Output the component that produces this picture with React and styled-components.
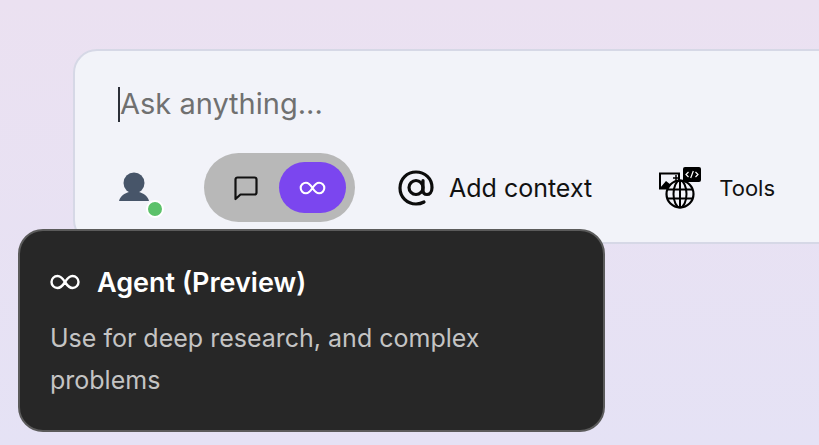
import React from 'react';
import styled, { createGlobalStyle } from 'styled-components';

const GlobalStyle = createGlobalStyle`
  html, body {
    margin: 0;
    padding: 0;
  }
  body {
    font-family: Inter, "Liberation Sans", sans-serif;
    overflow: hidden;
  }
`;

const Page = styled.div`
  position: relative;
  box-sizing: border-box;
  width: 819px;
  height: 445px;
  overflow: hidden;
  padding: 49px 0 0 73px;
  background: linear-gradient(180deg, #ebe1f1 0%, #e5e2f5 100%);
`;

const Card = styled.div`
  box-sizing: border-box;
  width: 900px;
  height: 195px;
  padding: 35px 0 0 43px;
  background: #f2f3f9;
  border: 2px solid #d6d8e6;
  border-radius: 24px;
`;

const InputLine = styled.div`
  display: flex;
  align-items: center;
  height: 36px;
`;

const Caret = styled.span`
  width: 2px;
  height: 35px;
  background: #2b2f38;
`;

const Placeholder = styled.span`
  font-size: 29px;
  line-height: 36px;
  color: #707070;
`;

const Toolbar = styled.div`
  display: flex;
  align-items: center;
  margin-top: 31px;
  height: 69px;
`;

const Avatar = styled.div`
  position: relative;
  width: 32px;
  height: 32px;
  margin-right: 54px;
`;

const OnlineDot = styled.span`
  position: absolute;
  right: -14px;
  bottom: -14px;
  box-sizing: border-box;
  width: 18px;
  height: 18px;
  background: #5cc16a;
  border: 2px solid #fff;
  border-radius: 50%;
`;

const ModeToggle = styled.div`
  display: flex;
  align-items: center;
  box-sizing: border-box;
  width: 151px;
  height: 69px;
  padding: 0 9px 0 8px;
  background: #b8b8b8;
  border-radius: 35px;
`;

const ModeButton = styled.div`
  display: flex;
  align-items: center;
  justify-content: center;
  width: 67px;
  height: 51px;
  border-radius: 26px;
  background: ${(p) => (p.$active ? '#7b46ef' : 'transparent')};
`;

const ContextButton = styled.div`
  display: flex;
  align-items: center;
  gap: 15px;
  margin-left: 43px;
  font-size: 25px;
  color: #111;
`;

const ToolsButton = styled.div`
  display: flex;
  align-items: center;
  gap: 13px;
  margin-left: 66px;
  font-size: 22px;
  color: #111;
`;

const Tooltip = styled.div`
  position: absolute;
  left: 18px;
  top: 229px;
  box-sizing: border-box;
  width: 587px;
  height: 203px;
  padding: 33px 30px 0 30px;
  background: #272727;
  border: 2px solid #5b5b5b;
  border-radius: 25px;
`;

const TooltipTitle = styled.div`
  display: flex;
  align-items: center;
  gap: 17px;
  height: 36px;
  font-size: 27px;
  font-weight: 600;
  color: #fff;
`;

const TooltipText = styled.p`
  margin: 17px 0 0;
  font-size: 25px;
  line-height: 42px;
  color: #c4c4c4;
`;

const InfinityIcon = ({ width, height, strokeWidth }) => (
  <svg width={width} height={height} viewBox="0 0 30 16" fill="none" stroke="#fff" strokeWidth={strokeWidth}>
    <path d="M15 8C12.5 4 10.5 2 7.5 2a6 6 0 0 0 0 12c3 0 5-2 7.5-6s4.500-6 7.500-6a6 6 0 0 1 0 12c-3 0-5-2-7.500-6Z" />
  </svg>
);

const UserIcon = () => (
  <svg width="32" height="32" viewBox="0 0 32 32" fill="#475569">
    <circle cx="16" cy="11" r="10.500" />
    <path d="M1 29c1-5 6-8 10-9h10c4 1 9 4 10 9Z" />
  </svg>
);

const ChatIcon = () => (
  <svg width="26" height="26" viewBox="0 0 26 26" fill="none" stroke="#111" strokeWidth="2.200" strokeLinejoin="round">
    <path d="M2.500 24V4.500a2 2 0 0 1 2-2h17a2 2 0 0 1 2 2v13a2 2 0 0 1-2 2H7.500Z" />
  </svg>
);

const AtIcon = () => (
  <svg width="36" height="36" viewBox="0 0 36 36" fill="none" stroke="#0c0c0c" strokeWidth="3.200" strokeLinecap="round">
    <circle cx="18" cy="17.500" r="7" />
    <path d="M25 10.500v9.500c0 3 1.800 4.500 4 4.500s5-2 5-7C34 8.500 27 2 18 2 9 2 2 9 2 18s7 16 16 16c3 0 5.500-.6 8-2" />
  </svg>
);

const ToolsIcon = () => (
  <svg width="48" height="42" viewBox="0 0 48 42">
    <rect x="2" y="6.500" width="19" height="15" fill="#f2f3f9" stroke="#000" strokeWidth="2" />
    <path d="M2 21l6-7 5 4 3-2 5 5v1H2Z" fill="#000" />
    <path d="M15 11h6M18 8v6" stroke="#000" strokeWidth="1.500" />
    <rect x="25" y="0" width="18" height="15" rx="2" fill="#000" />
    <path d="M30.500 5l-2.500 2.500 2.500 2.500M37.500 5l2.500 2.500-2.500 2.500M35.300 4l-2.600 7" fill="none" stroke="#fff" strokeWidth="1.200" />
    <circle cx="22" cy="27" r="13.500" fill="#f2f3f9" stroke="#000" strokeWidth="2.200" />
    <ellipse cx="22" cy="27" rx="6.500" ry="13.500" fill="none" stroke="#000" strokeWidth="2" />
    <path d="M22 13.500v27M9 22.500h26M9 31.500h26" fill="none" stroke="#000" strokeWidth="2" />
  </svg>
);

export default function App() {
  return (
    <Page>
      <GlobalStyle />
      <Card>
        <InputLine>
          <Caret />
          <Placeholder>Ask anything...</Placeholder>
        </InputLine>
        <Toolbar>
          <Avatar>
            <UserIcon />
            <OnlineDot />
          </Avatar>
          <ModeToggle>
            <ModeButton>
              <ChatIcon />
            </ModeButton>
            <ModeButton $active>
              <InfinityIcon width={27} height={14} strokeWidth={2.400} />
            </ModeButton>
          </ModeToggle>
          <ContextButton>
            <AtIcon />
            Add context
          </ContextButton>
          <ToolsButton>
            <ToolsIcon />
            Tools
          </ToolsButton>
        </Toolbar>
      </Card>
      <Tooltip>
        <TooltipTitle>
          <InfinityIcon width={30} height={16} strokeWidth={2.400} />
          Agent (Preview)
        </TooltipTitle>
        <TooltipText>
          Use for deep research, and complex
          <br />
          problems
        </TooltipText>
      </Tooltip>
    </Page>
  );
}
